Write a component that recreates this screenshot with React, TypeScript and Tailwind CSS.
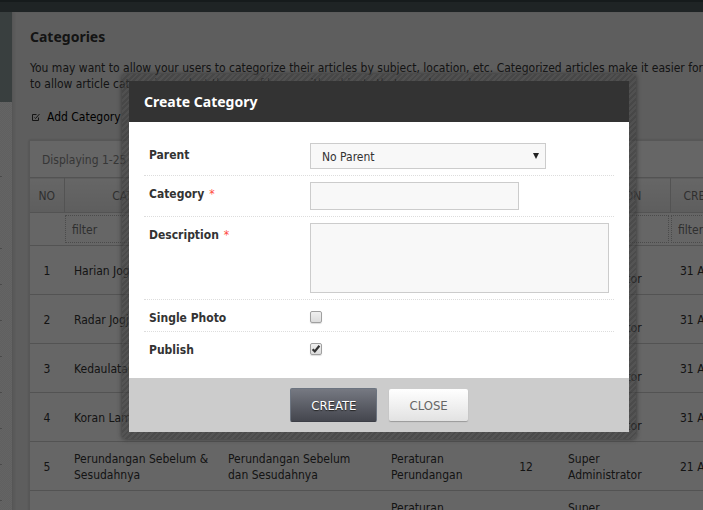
import type { ReactNode } from 'react';

const rows = [
  { no: 1, name: 'Harian Jogja', desc: 'Harian Jogja', parent: '', count: 31, date: '31 Aug 2014' },
  { no: 2, name: 'Radar Jogja', desc: 'Radar Jogja', parent: '', count: 31, date: '31 Aug 2014' },
  { no: 3, name: 'Kedaulatan Rakyat', desc: 'Kedaulatan Rakyat', parent: '', count: 31, date: '31 Aug 2014' },
  { no: 4, name: 'Koran Lama', desc: 'Koran Lama', parent: '', count: 31, date: '31 Aug 2014' },
  {
    no: 5,
    name: 'Perundangan Sebelum & Sesudahnya',
    desc: 'Perundangan Sebelum dan Sesudahnya',
    parent: 'Peraturan Perundangan',
    count: 12,
    date: '21 Aug 2014',
  },
  { no: 6, name: '', desc: '', parent: 'Peraturan Perundangan', count: null, date: '' },
];

const columns = ['NO', 'CATEGORY', 'DESCRIPTION', 'PARENT', 'COUNT', 'CREATION', 'CREATION DATE'];

function Sidebar() {
  return (
    <aside className="w-3 shrink-0 bg-[#fafafa] bg-[repeating-conic-gradient(#f0f0f0_0_25%,transparent_0_50%)] bg-[length:2px_2px]">
      <div className="h-[90px] bg-[#909e9e]" />
      <ul className="w-0.5">
        <li className="h-[75px] border-b border-[#bbb]" />
        <li className="h-[72px] border-b border-[#bbb]" />
        {[0, 1, 2, 3, 4, 5, 6].map((i) => (
          <li key={i} className="h-9 border-b border-[#bbb]" />
        ))}
      </ul>
    </aside>
  );
}

function CategoryTable() {
  return (
    <section className="-ml-px w-[755px] border border-[#dadada] bg-white shadow-[0_0_2px_#bbb]">
      <p className="px-3 pt-[11px] pb-[9px] leading-4 text-[#888]">Displaying 1-25 of 28 results.</p>
      <table className="w-full table-fixed border-collapse">
        <colgroup>
          <col className="w-[34px]" />
          <col className="w-[154px]" />
          <col className="w-[163px]" />
          <col className="w-[113px]" />
          <col className="w-[64px]" />
          <col className="w-[112px]" />
          <col className="w-[113px]" />
        </colgroup>
        <thead>
          <tr className="h-[35px] border-y border-[#cfcfcf] bg-linear-to-b from-white to-[#ebebeb]">
            {columns.map((name) => (
              <th key={name} className="border-r border-[#cfcfcf] pt-0.5 font-normal text-[#777]">
                {name}
              </th>
            ))}
          </tr>
          <tr className="h-[33px] border-b border-[#cfcfcf]">
            {columns.map((name, i) => (
              <td key={name} className="px-px">
                {i > 0 && (
                  <input
                    aria-label={`Filter ${name}`}
                    placeholder="filter"
                    className="block h-7 w-full border border-dotted border-[#bbb] px-1.5 pt-0.5 placeholder:text-[#777]"
                  />
                )}
              </td>
            ))}
          </tr>
        </thead>
        <tbody>
          {rows.map((row) => (
            <tr key={row.no} className="h-[49px] border-b border-[#cfcfcf] leading-4 *:pt-0.5">
              <td className="text-center">{row.no}</td>
              <td className="pr-2 pl-2.5">{row.name}</td>
              <td className="pr-2 pl-2.5">{row.desc}</td>
              <td className="pr-2 pl-2.5">{row.parent}</td>
              <td className="text-center">{row.count}</td>
              <td className="pr-2 pl-2.5">Super Administrator</td>
              <td className="pr-2 pl-2.5">{row.date}</td>
            </tr>
          ))}
        </tbody>
      </table>
    </section>
  );
}

type FieldProps = { id: string; label: string; required?: boolean; last?: boolean; children: ReactNode };

function Field({ id, label, required, last, children }: FieldProps) {
  return (
    <div className={`flex items-start px-[5px] py-1.5 ${last ? '' : 'border-b border-dotted border-[#ddd]'}`}>
      <label htmlFor={id} className="w-[161px] shrink-0 pt-[5px] leading-[14px] font-bold">
        {label}
        {required && <span className="ml-[5px] font-normal text-[#ff4a40]">*</span>}
      </label>
      {children}
    </div>
  );
}

function Tick({ id, checked }: { id: string; checked?: boolean }) {
  return (
    <span className="relative mt-[5px] block size-3">
      <input
        id={id}
        type="checkbox"
        defaultChecked={checked}
        className="peer block size-3 appearance-none rounded-xs border border-[#a0a0a0] bg-linear-to-b from-[#f0f0f0] to-[#dcdcdc] shadow-[0_1px_1px_#ddd]"
      />
      <svg
        viewBox="0 0 12 12"
        className="pointer-events-none absolute inset-0 hidden size-3 peer-checked:block"
        fill="none"
        stroke="#333"
        strokeWidth="2.2"
      >
        <path d="M2.6 6.2 L4.8 8.4 L9.4 2.8" />
      </svg>
    </span>
  );
}

function CreateDialog() {
  return (
    <div
      role="dialog"
      aria-label="Create Category"
      className="rounded-sm bg-[#383838]/60 bg-[repeating-linear-gradient(135deg,transparent_0_2px,#ffffff0d_2px_4px)] p-[7px] shadow-[0_0_5px_#333]"
    >
      <form className="w-[500px]" onSubmit={(e) => e.preventDefault()}>
        <h2 className="bg-[#333] px-[15px] py-2.5 font-['Noto_Sans',sans-serif] text-sm leading-[21px] font-bold text-white">
          Create Category
        </h2>
        <div className="bg-white p-[15px] text-[#333]">
          <Field id="parent" label="Parent">
            <span className="relative">
              <select
                id="parent"
                className="block h-[26px] w-[236px] appearance-none border border-[#ccc] bg-[#f8f8f8] px-[11px] pt-0.5"
              >
                <option>No Parent</option>
              </select>
              <svg viewBox="0 0 6 6" className="pointer-events-none absolute top-2.5 right-[7px] size-1.5">
                <path d="M0 0h6L3 6z" fill="#222" />
              </svg>
            </span>
          </Field>
          <Field id="category" label="Category" required>
            <input id="category" className="block h-7 w-[209px] border border-[#ccc] bg-[#f8f8f8] px-2" />
          </Field>
          <Field id="description" label="Description" required>
            <textarea
              id="description"
              className="block h-[70px] w-[299px] resize-none border border-[#ccc] bg-[#f8f8f8] px-2"
            />
          </Field>
          <Field id="single" label="Single Photo">
            <Tick id="single" />
          </Field>
          <Field id="publish" label="Publish" last>
            <Tick id="publish" checked />
          </Field>
        </div>
        <div className="flex items-center justify-center gap-3 bg-[#ccc] py-2.5 text-[13px]">
          <button
            type="submit"
            className="h-[34px] rounded-xs border border-[#6c7480] border-b-[#3c3e46] bg-linear-to-b from-[#767982] to-[#44464e] px-5 pt-px text-white [text-shadow:0_1px_1px_#222]"
          >
            CREATE
          </button>
          <button
            type="button"
            className="h-8 rounded-xs bg-linear-to-b from-white to-[#e2e2e2] px-5 pt-px text-[#666] shadow-[0_1px_1px_#999]"
          >
            CLOSE
          </button>
        </div>
      </form>
    </div>
  );
}

export default function App() {
  return (
    <div className="relative h-screen overflow-hidden bg-[#ebebeb] font-['DejaVu_Sans_Condensed','DejaVu_Sans',sans-serif] text-xs text-[#333]">
      <header className="h-3 border-t-2 border-[#384446] bg-[#4e5a5c]" />
      <div className="flex">
        <Sidebar />
        <main className="min-w-0 grow border-l border-[#d8d8d8] pt-4 pl-[17px] shadow-[inset_2px_0_2px_#dedede]">
          <h1 className="font-['Noto_Sans',sans-serif] text-sm leading-[18px] font-bold">Categories</h1>
          <p className="mt-3.5 leading-4 whitespace-nowrap">
            You may want to allow your users to categorize their articles by subject, location, etc. Categorized
            articles make it easier for users
            <br />
            to allow article categories, select the set of boxes with subjects that may be used
          </p>
          <a href="#add" className="mt-[17px] mb-[15px] flex items-center gap-1.5 leading-4 text-black">
            <svg viewBox="0 0 11 11" className="size-[11px]" fill="none" stroke="#333" strokeWidth="1">
              <path d="M6.5 2.5h-4v6h6v-3M4.5 5.5l1 1 4-4.5" />
            </svg>
            Add Category
          </a>
          <CategoryTable />
        </main>
      </div>
      <div className="absolute inset-0 flex items-start bg-black/60 pt-[74px] pl-[122px]">
        <CreateDialog />
      </div>
    </div>
  );
}
